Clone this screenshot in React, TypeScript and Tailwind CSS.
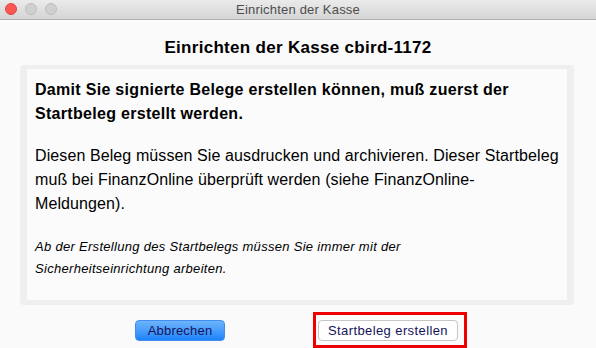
const App = () => {
  return (
    <div className="w-[596px] h-[348px] bg-[#fafafa] overflow-hidden flex flex-col" style={{ fontFamily: '"Liberation Sans", Arial, sans-serif' }}>
      <div className="h-[20px] shrink-0 relative flex items-center justify-center bg-gradient-to-b from-[#ebebeb] to-[#d5d5d5] border-b border-[#b1b1b1]">
        <div className="absolute left-[5px] top-[3px] flex gap-[8px]">
          <span className="w-[12px] h-[12px] rounded-full bg-[#fc5753] border border-[#df4744]"></span>
          <span className="w-[12px] h-[12px] rounded-full bg-[#d0d0d0] border border-[#bdbdbd]"></span>
          <span className="w-[12px] h-[12px] rounded-full bg-[#d0d0d0] border border-[#bdbdbd]"></span>
        </div>
        <span className="text-[13px] text-[#4d4d4d] tracking-[0.2px]">Einrichten der Kasse</span>
      </div>

      <h1 className="mt-[17px] text-center text-[17px] font-bold text-black leading-[22px] tracking-[0.3px]">
        Einrichten der Kasse cbird-1172
      </h1>

      <div className="mt-[6px] ml-[20px] w-[554px] h-[243px] bg-[#efefef] rounded-[4px] pt-[4px] pb-[5px] px-[7px]">
        <div className="h-full bg-[#fbfbfb] pl-[8px] pt-[9px] text-black">
          <p className="w-[522px] text-[16px] font-bold leading-[24px] tracking-[0.3px]">
            Damit Sie signierte Belege erstellen können, muß zuerst der Startbeleg erstellt werden.
          </p>
          <p className="w-[527px] mt-[18px] text-[16px] leading-[24px] tracking-[0.1px]">
            Diesen Beleg müssen Sie ausdrucken und archivieren. Dieser Startbeleg muß bei FinanzOnline überprüft werden (siehe FinanzOnline-Meldungen).
          </p>
          <p className="mt-[20px] text-[13px] italic leading-[22px] w-[420px] tracking-[0.3px]">
            Ab der Erstellung des Startbelegs müssen Sie immer mit der Sicherheitseinrichtung arbeiten.
          </p>
        </div>
      </div>

      <div className="mt-[7px] flex items-center pl-[135px]">
        <button className="w-[90px] h-[21px] rounded-[4px] bg-gradient-to-b from-[#6cb4fb] to-[#1a83fa] border border-[#3f8ef0] text-[13px] text-[#14145a] leading-none tracking-[0.2px]">
          Abbrechen
        </button>
        <div className="ml-[88px] border-[3px] border-[#ee0000] pl-[2px] pr-[6px] py-[3px]">
          <button className="w-[140px] h-[21px] rounded-[4px] bg-white border border-[#c6c6c6] text-[13px] text-[#14145a] leading-none tracking-[0.4px]">
            Startbeleg erstellen
          </button>
        </div>
      </div>
    </div>
  );
};

export default App;
